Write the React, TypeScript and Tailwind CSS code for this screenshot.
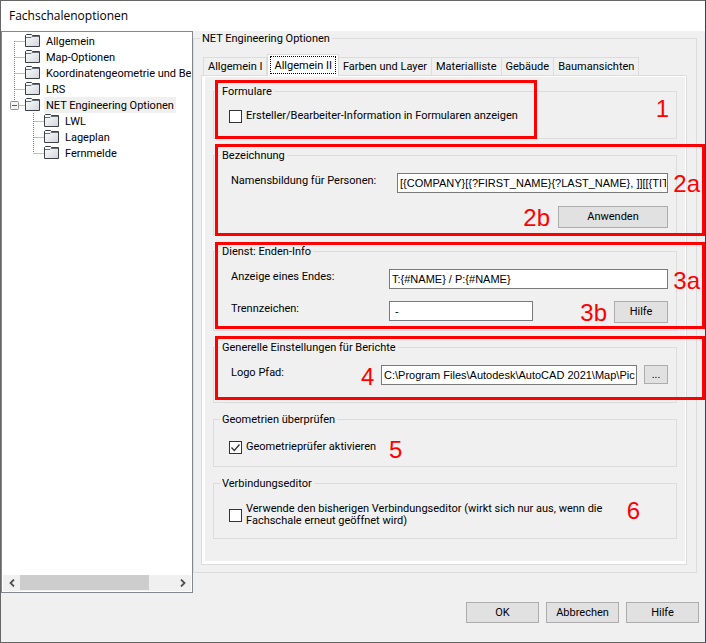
import React, { useState } from 'react';

interface TreeItem {
  label: string;
  child?: boolean;
  open?: boolean;
  first?: boolean;
  last?: boolean;
}

const treeItems: TreeItem[] = [
  { label: 'Allgemein', first: true },
  { label: 'Map-Optionen' },
  { label: 'Koordinatengeometrie und Bem' },
  { label: 'LRS' },
  { label: 'NET Engineering Optionen', open: true, last: true },
  { label: 'LWL', child: true },
  { label: 'Lageplan', child: true },
  { label: 'Fernmelde', child: true, last: true },
];

const tabs = ['Allgemein I', 'Allgemein II', 'Farben und Layer', 'Materialliste', 'Gebäude', 'Baumansichten'];

const buttonStyle = 'border border-[#adadad] bg-[#e1e1e1] text-center leading-4';
const inputStyle = "h-5 min-w-0 border border-[#7a7a7a] bg-white pr-px pl-[2px] font-['Liberation_Sans',sans-serif]";

const FolderIcon = () => (
  <svg width="16" height="16" viewBox="0 0 16 16" className="shrink-0" aria-hidden="true">
    <defs>
      <linearGradient id="folder" x1="0" y1="0" x2="1" y2="1">
        <stop offset="0" stopColor="#ffffff" />
        <stop offset="1" stopColor="#d3d5db" />
      </linearGradient>
    </defs>
    <path d="M0.500 2.500l1-1h5l1 1h7v11h-14z" fill="url(#folder)" stroke="#3d3f4a" />
    <path d="M1 4.500h5l1-1h7" fill="none" stroke="#6a6d7a" />
  </svg>
);

const TreeLines: React.FC<{ item: TreeItem }> = ({ item }) => {
  const width = item.child ? 41 : 22;
  const x = item.child ? 30.5 : 11.5;
  return (
    <svg width={width} height="16" className="shrink-0" aria-hidden="true">
      <path
        d={`M${x} ${item.first ? 8 : 0}V${item.last ? 8 : 16}M${x} 8.500H${width}`}
        stroke="#808080"
        strokeDasharray="1 1"
        fill="none"
      />
      {item.open && (
        <>
          <rect x="7.500" y="4.500" width="8" height="8" rx="1" fill="#f4f4f4" stroke="#919191" />
          <path d="M9 8.500h5" stroke="#3c56a0" />
        </>
      )}
    </svg>
  );
};

interface GroupProps {
  title: string;
  className: string;
  children: React.ReactNode;
  marks?: React.ReactNode;
}

const Group: React.FC<GroupProps> = ({ title, className, children, marks }) => (
  <div className="relative">
    <fieldset className="min-w-0 border border-[#dcdcdc]">
      <legend className="ml-[6px] px-[2px] pt-[2px] leading-[14px]">{title}</legend>
      <div className={className}>{children}</div>
    </fieldset>
    {marks}
  </div>
);

const Frame = ({ className }: { className: string }) => (
  <div className={`pointer-events-none absolute border-3 border-[#ff0000] ${className}`} />
);

const Mark = ({ className, children }: { className: string; children: React.ReactNode }) => (
  <span className={`absolute font-['Liberation_Sans',sans-serif] text-2xl leading-6 text-[#ff0000] ${className}`}>
    {children}
  </span>
);

const Check = ({ checked, onChange }: { checked: boolean; onChange: (v: boolean) => void }) => (
  <span className="relative flex h-[13px] w-[13px] shrink-0">
    <input
      type="checkbox"
      checked={checked}
      onChange={(e) => onChange(e.target.checked)}
      className="h-[13px] w-[13px] appearance-none border border-[#333333] bg-white"
    />
    {checked && (
      <svg width="13" height="13" className="pointer-events-none absolute inset-0" aria-hidden="true">
        <path d="M2.500 6.500l2.800 3L10.500 3.500" fill="none" stroke="#333333" strokeWidth="1.300" />
      </svg>
    )}
  </span>
);

const App: React.FC = () => {
  const [activeTab, setActiveTab] = useState('Allgemein II');
  const [creatorInfo, setCreatorInfo] = useState(false);
  const [geometry, setGeometry] = useState(true);
  const [oldEditor, setOldEditor] = useState(false);

  return (
    <div className="flex min-h-screen flex-col border border-[#666666] border-r-[#1f4a70] bg-[#f0f0f0] font-['Roboto','Liberation_Sans',sans-serif] text-[11px] text-black">
      <header className="bg-white px-2 py-[5px]">
        <h1 className="font-['Open_Sans',sans-serif] text-xs leading-5">Fachschalenoptionen</h1>
      </header>

      <main className="flex">
        <nav className="flex w-48 shrink-0 flex-col border border-[#828790] bg-white p-px">
          <ul className="flex-1 overflow-hidden">
            {treeItems.map((item) => (
              <li key={item.label} className="flex h-4 items-center">
                <TreeLines item={item} />
                <FolderIcon />
                <span
                  className={`ml-[3px] px-[2px] pt-[2px] leading-[14px] whitespace-nowrap ${item.open ? 'bg-[#f0f0f0]' : ''}`}
                >
                  {item.label}
                </span>
              </li>
            ))}
          </ul>
          <div className="flex h-4 bg-[#f0f0f0]">
            <button aria-label="Links" className="flex w-[17px] items-center justify-center">
              <svg width="8" height="8" viewBox="0 0 8 8">
                <path d="M6 0.500L2.500 4L6 7.500" fill="none" stroke="#505050" strokeWidth="1.800" />
              </svg>
            </button>
            <div className="flex-1">
              <div className="h-[15px] w-[84%] bg-[#cdcdcd]" />
            </div>
            <button aria-label="Rechts" className="flex w-[17px] items-center justify-center">
              <svg width="8" height="8" viewBox="0 0 8 8">
                <path d="M2 0.500L5.500 4L2 7.500" fill="none" stroke="#505050" strokeWidth="1.800" />
              </svg>
            </button>
          </div>
        </nav>

        <div className="min-w-0 flex-1 pr-2 pb-5">
          <fieldset className="min-w-0 border border-[#dcdcdc] pt-[9px] pr-[9px] pb-[7px] pl-[7px]">
            <legend className="ml-[-1px] px-[2px] pt-[2px] leading-3">NET Engineering Optionen</legend>

            <div role="tablist" className="flex items-end pl-[2px]">
              {tabs.map((tab) => (
                <button
                  key={tab}
                  role="tab"
                  aria-selected={tab === activeTab}
                  onClick={() => setActiveTab(tab)}
                  className={
                    tab === activeTab
                      ? 'relative -mb-px h-[22px] border border-b-0 border-[#dcdcdc] bg-white px-[2px] pb-px whitespace-nowrap'
                      : 'h-[18px] border border-b-0 border-l-0 border-[#dcdcdc] px-1 pt-px leading-4 whitespace-nowrap first:border-l'
                  }
                >
                  <span
                    className={tab === activeTab ? 'block border border-dotted border-black px-[3px] pt-px leading-[15px]' : ''}
                  >
                    {tab}
                  </span>
                </button>
              ))}
            </div>

            <div className="border border-[#dcdcdc]">
              <div className="flex flex-col gap-2 border border-b-3 border-l-3 border-white pt-[6px] pr-2 pb-[22px] pl-2">
                <Group
                  title="Formulare"
                  className="min-h-[39px] pt-[9px] pl-[15px]"
                  marks={
                    <>
                      <Frame className="-top-[3px] bottom-0 left-[2px] w-[322px]" />
                      <Mark className="top-[14px] right-2">1</Mark>
                    </>
                  }
                >
                  <label className="flex items-center gap-1 leading-4">
                    <Check checked={creatorInfo} onChange={setCreatorInfo} />
                    Ersteller/Bearbeiter-Information in Formularen anzeigen
                  </label>
                </Group>

                <Group
                  title="Bezeichnung"
                  className="min-h-[71px] pt-[10px] pr-2 pl-[17px]"
                  marks={
                    <>
                      <Frame className="-top-[3px] -right-[28px] -bottom-px left-[2px]" />
                      <Mark className="top-[25px] -right-[23px]">2a</Mark>
                      <Mark className="top-[59px] right-[127px]">2b</Mark>
                    </>
                  }
                >
                  <div className="flex items-start">
                    <label htmlFor="names" className="w-[166px] leading-4">Namensbildung für Personen:</label>
                    <input
                      id="names"
                      defaultValue="[{COMPANY}[{?FIRST_NAME}{?LAST_NAME}, ]][[{TIT"
                      className={`${inputStyle} flex-1`}
                    />
                  </div>
                  <div className="mt-[13px] flex justify-end">
                    <button className={`${buttonStyle} h-[22px] w-[110px]`}>Anwenden</button>
                  </div>
                </Group>

                <Group
                  title="Dienst: Enden-Info"
                  className="min-h-[71px] pt-[10px] pr-2 pl-[17px]"
                  marks={
                    <>
                      <Frame className="-top-px -right-[28px] bottom-[2px] left-[2px]" />
                      <Mark className="top-[26px] -right-[23px]">3a</Mark>
                      <Mark className="top-[58px] right-[70px]">3b</Mark>
                    </>
                  }
                >
                  <div className="flex items-start">
                    <label htmlFor="end" className="w-[158px] leading-4">Anzeige eines Endes:</label>
                    <input id="end" defaultValue="T:{#NAME} / P:{#NAME}" className={`${inputStyle} flex-1`} />
                  </div>
                  <div className="mt-3 flex items-start">
                    <label htmlFor="separator" className="w-[158px] leading-4">Trennzeichen:</label>
                    <input id="separator" defaultValue=" - " className={`${inputStyle} w-36`} />
                    <button className={`${buttonStyle} ml-auto h-[22px] w-[54px]`}>Hilfe</button>
                  </div>
                </Group>

                <Group
                  title="Generelle Einstellungen für Berichte"
                  className="min-h-[47px] pt-[10px] pr-2 pl-[17px]"
                  marks={
                    <>
                      <Frame className="-top-[3px] -right-[28px] bottom-[3px] left-[2px]" />
                      <Mark className="top-[26px] left-[148px]">4</Mark>
                    </>
                  }
                >
                  <div className="flex items-start">
                    <label htmlFor="logo" className="w-[150px] leading-4">Logo Pfad:</label>
                    <input
                      id="logo"
                      defaultValue="C:\Program Files\Autodesk\AutoCAD 2021\Map\Pic"
                      className={`${inputStyle} flex-1`}
                    />
                    <button className={`${buttonStyle} ml-[7px] h-[19px] w-6`}>...</button>
                  </div>
                </Group>

                <Group
                  title="Geometrien überprüfen"
                  className="min-h-[39px] pt-[12px] pl-[15px]"
                  marks={<Mark className="top-[27px] left-[176px]">5</Mark>}
                >
                  <label className="flex items-center gap-1 leading-4">
                    <Check checked={geometry} onChange={setGeometry} />
                    Geometrieprüfer aktivieren
                  </label>
                </Group>

                <Group
                  title="Verbindungseditor"
                  className="min-h-[47px] pt-[12px] pl-[15px]"
                  marks={<Mark className="top-6 right-[37px]">6</Mark>}
                >
                  <label className="flex items-center gap-1 leading-3">
                    <Check checked={oldEditor} onChange={setOldEditor} />
                    <span>
                      Verwende den bisherigen Verbindungseditor (wirkt sich nur aus, wenn die
                      <br />
                      Fachschale erneut geöffnet wird)
                    </span>
                  </label>
                </Group>
              </div>
            </div>
          </fieldset>
        </div>
      </main>

      <footer className="flex justify-end gap-[7px] px-[6px] pt-[9px] pb-4">
        <button className={`${buttonStyle} h-[21px] w-[73px]`}>OK</button>
        <button className={`${buttonStyle} h-[21px] w-[73px]`}>Abbrechen</button>
        <button className={`${buttonStyle} h-[21px] w-[73px]`}>Hilfe</button>
      </footer>
    </div>
  );
};

export default App;
